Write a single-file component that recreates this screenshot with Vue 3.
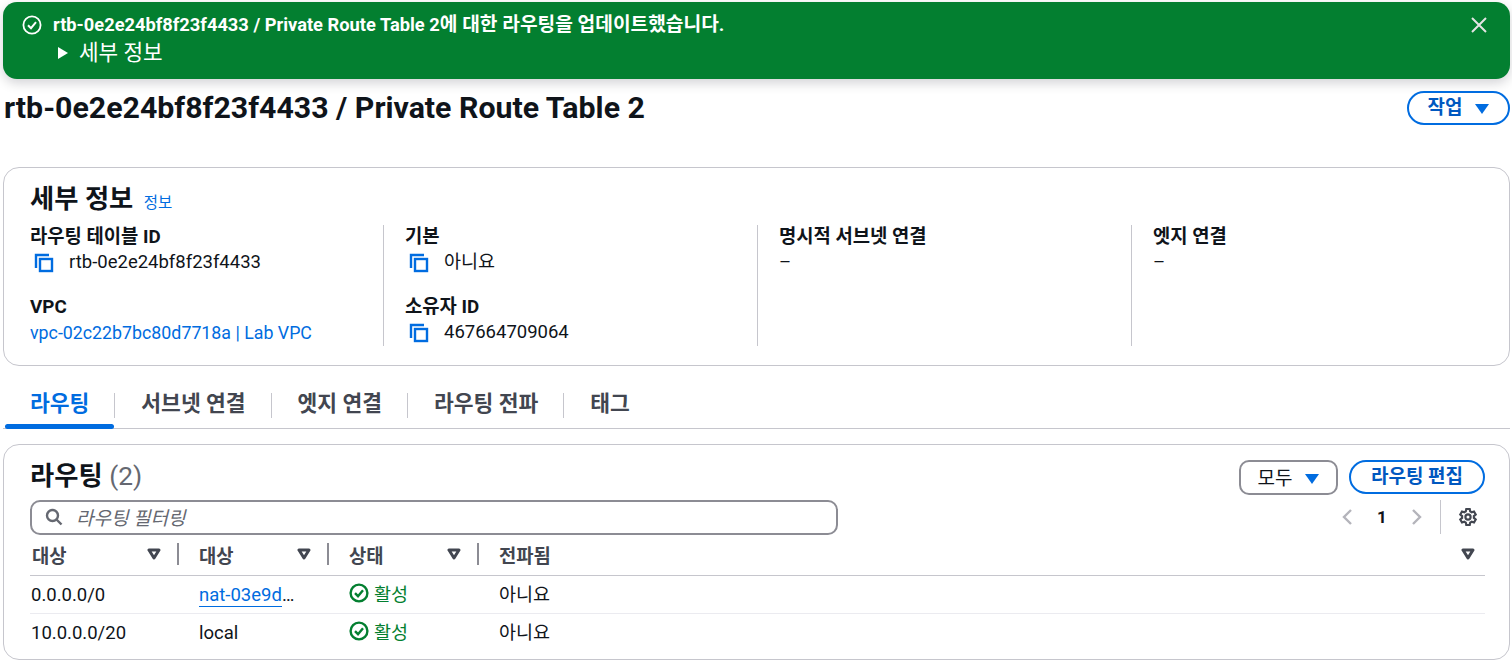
<script setup>
const details = [
  [
    { label: '라우팅 테이블 ID', value: 'rtb-0e2e24bf8f23f4433', copy: true },
    { label: 'VPC', value: 'vpc-02c22b7bc80d7718a | Lab VPC', link: true }
  ],
  [
    { label: '기본', value: '아니요', copy: true },
    { label: '소유자 ID', value: '467664709064', copy: true }
  ],
  [{ label: '명시적 서브넷 연결', value: '–' }],
  [{ label: '엣지 연결', value: '–' }]
]
const tabs = ['라우팅', '서브넷 연결', '엣지 연결', '라우팅 전파', '태그']
const columns = ['대상', '대상', '상태', '전파됨']
const routes = [
  { dest: '0.0.0.0/0', target: 'nat-03e9d', link: true },
  { dest: '10.0.0.0/20', target: 'local', link: false }
]
</script>

<template>
  <div class="page">
    <div class="flash">
      <div class="flash-body">
        <div class="flash-title">
          <svg class="flash-check" viewBox="0 0 20 20" width="20" height="20">
            <circle cx="10" cy="10" r="8.6" />
            <path d="M6 10.2l3 3 5-6" />
          </svg>
          <span>rtb-0e2e24bf8f23f4433 / Private Route Table 2<span class="flash-ko">에 대한 라우팅을 업데이트했습니다.</span></span>
        </div>
        <div class="flash-more"><i class="caret-right"></i>세부 정보</div>
      </div>
      <svg class="flash-close" viewBox="0 0 18 18" width="18" height="18">
        <path d="M2 2l14 14M16 2L2 16" />
      </svg>
    </div>

    <div class="page-head">
      <h1>rtb-0e2e24bf8f23f4433 / Private Route Table 2</h1>
      <button class="btn action-btn">작업<i class="caret-down"></i></button>
    </div>

    <section class="card detail-card">
      <h2>세부 정보 <a class="info">정보</a></h2>
      <div class="detail-grid">
        <div v-for="(col, i) in details" :key="i" class="detail-col">
          <div v-for="item in col" :key="item.label" class="detail-item">
            <div class="detail-label">{{ item.label }}</div>
            <div class="detail-value" :class="{ link: item.link }">
              <svg v-if="item.copy" class="copy" viewBox="0 0 22 22" width="22" height="22">
                <path d="M3 16V3h13" />
                <rect x="7" y="7" width="12" height="12" />
              </svg>
              <span>{{ item.value }}</span>
            </div>
          </div>
        </div>
      </div>
    </section>

    <div class="tabs">
      <div v-for="(tab, i) in tabs" :key="tab" class="tab" :class="{ active: i === 0 }">
        <span>{{ tab }}</span>
      </div>
    </div>

    <section class="card route-card">
      <div class="route-head">
        <h2>라우팅 <span class="count">(2)</span></h2>
        <div class="route-actions">
          <button class="btn select-btn">모두<i class="caret-down"></i></button>
          <button class="btn edit-btn">라우팅 편집</button>
        </div>
      </div>
      <div class="filter-row">
        <div class="filter">
          <svg viewBox="0 0 18 18" width="18" height="18">
            <circle cx="7.5" cy="7.5" r="5.5" />
            <path d="M11.5 11.5L16.5 16.5" />
          </svg>
          <span>라우팅 필터링</span>
        </div>
        <div class="pager">
          <svg class="chev" viewBox="0 0 14 18" width="14" height="18"><path d="M11 2L4 9l7 7" /></svg>
          <b>1</b>
          <svg class="chev" viewBox="0 0 14 18" width="14" height="18"><path d="M3 2l7 7-7 7" /></svg>
          <span class="pager-sep"></span>
          <svg class="gear" viewBox="0 0 20 20" width="20" height="20">
            <path d="M8.3 2h3.4l.5 2.4 1.5.9 2.3-.8 1.7 3-1.8 1.6v1.8l1.8 1.6-1.7 3-2.3-.8-1.5.9-.5 2.4H8.3l-.5-2.4-1.5-.9-2.3.8-1.7-3 1.8-1.6V9.1L2.3 7.5l1.7-3 2.3.8 1.5-.9z" />
            <circle cx="10" cy="10" r="2.6" />
          </svg>
        </div>
      </div>
      <table>
        <thead>
          <tr>
            <th v-for="(col, i) in columns" :key="i">
              <div class="th-inner">
                <span>{{ col }}</span>
                <svg class="sort" viewBox="0 0 14 12" width="14" height="12">
                  <path d="M2 2h10L7 10z" />
                </svg>
                <em v-if="i < 3" class="th-sep"></em>
              </div>
            </th>
          </tr>
        </thead>
        <tbody>
          <tr v-for="r in routes" :key="r.dest">
            <td>{{ r.dest }}</td>
            <td>
              <span v-if="r.link"><a class="nat">{{ r.target }}</a>…</span>
              <span v-else>{{ r.target }}</span>
            </td>
            <td class="status-cell">
              <span class="status">
                <svg viewBox="0 0 20 20" width="20" height="20">
                  <circle cx="10" cy="10" r="8.4" />
                  <path d="M6 10.2l3 3 5-6" />
                </svg>
                활성
              </span>
            </td>
            <td class="prop-cell">아니요</td>
          </tr>
        </tbody>
      </table>
    </section>
  </div>
</template>

<style>
html, body {
  background: #fff;
  overflow: hidden;
}
</style>

<style scoped>
.page {
  padding: 2px 2px 0 3px;
  height: 663px;
  box-sizing: border-box;
  font-family: Roboto, "Noto Sans CJK KR", sans-serif;
  font-size: 18.5px;
  color: #0f141a;
}

.flash {
  height: 77px;
  box-sizing: border-box;
  background: #037f30;
  border-radius: 14px;
  box-shadow: 0 4px 12px rgba(0, 7, 22, 0.18);
  color: #fff;
  display: flex;
  justify-content: space-between;
  padding: 9px 22px 0 19px;
}

.flash-title {
  display: flex;
  align-items: center;
  gap: 11px;
  font-weight: 700;
  font-size: 18.3px;
  line-height: 28px;
}

.flash-ko {
  font-size: 19.2px;
}

.flash-check {
  fill: none;
  stroke: #fff;
  stroke-width: 1.8;
}

.flash-check path {
  stroke-width: 2;
}

.flash-more {
  display: flex;
  align-items: center;
  margin: 0 0 0 36px;
  font-size: 21.3px;
  line-height: 28px;
}

.caret-right {
  width: 0;
  height: 0;
  border-left: 10px solid #fff;
  border-top: 6.5px solid transparent;
  border-bottom: 6.5px solid transparent;
  margin-right: 11px;
}

.flash-close {
  margin-top: 5px;
  fill: none;
  stroke: #e4e4e4;
  stroke-width: 2;
}

.page-head {
  display: flex;
  justify-content: space-between;
  align-items: flex-start;
  height: 88px;
}

h1 {
  margin: 12px 0 0 1px;
  font-size: 30.3px;
  line-height: 34px;
  font-weight: 700;
}

.btn {
  background: #fff;
  font-family: inherit;
  font-weight: 700;
  font-size: 19px;
  padding: 0;
  box-sizing: border-box;
  display: flex;
  align-items: center;
  justify-content: center;
}

.action-btn {
  margin-top: 12px;
  width: 103px;
  height: 34px;
  border: 2px solid #006ce0;
  border-radius: 17px;
  color: #0058c0;
  padding-bottom: 5px;
}

.action-btn .caret-down {
  margin-top: 7px;
  margin-left: 13px;
}

.caret-down {
  width: 0;
  height: 0;
  border-top: 10px solid #006ce0;
  border-left: 7px solid transparent;
  border-right: 7px solid transparent;
  margin: 4px 0 0 12px;
}

.card {
  border: 1px solid #c6c6cd;
  border-radius: 16px;
  box-sizing: border-box;
  background: #fff;
}

.detail-card {
  height: 199px;
  padding: 14px 26px 0;
}

h2 {
  margin: 0;
  font-size: 26.3px;
  line-height: 34px;
  font-weight: 700;
}

.info {
  font-size: 15.5px;
  font-weight: 400;
  color: #006ce0;
  margin-left: 4px;
}

.detail-grid {
  display: grid;
  grid-template-columns: 353px 374px 374px 1fr;
  height: 120px;
  margin-top: 5px;
}

.detail-col {
  border-left: 1px solid #c6c6cd;
  padding-left: 21px;
  display: flex;
  flex-direction: column;
  gap: 19px;
}

.detail-col:first-child {
  border-left: none;
  padding-left: 0;
}

.detail-label {
  font-weight: 700;
  font-size: 18.8px;
  line-height: 24px;
}

.detail-value {
  display: flex;
  align-items: center;
  gap: 14px;
  line-height: 27px;
  font-size: 18.5px;
  height: 27px;
}

.detail-value.link {
  color: #006ce0;
  font-size: 17.8px;
}

.copy {
  margin-left: 3px;
  fill: none;
  stroke: #006ce0;
  stroke-width: 2.4;
}

.tabs {
  display: flex;
  height: 43px;
  margin-top: 19px;
  border-bottom: 1px solid #c6c6cd;
}

.tab {
  position: relative;
  padding: 0 25px 0 27px;
  font-size: 21.5px;
  font-weight: 700;
  color: #424650;
  line-height: 38px;
  height: 43px;
}

.tab span {
  display: block;
}

.tab + .tab::before {
  content: '';
  position: absolute;
  left: 0;
  top: 8px;
  height: 25px;
  width: 1px;
  background: #c6c6cd;
}

.tab.active {
  color: #006ce0;
}

.tab.active::after {
  content: '';
  position: absolute;
  left: 2px;
  right: 0;
  bottom: -1px;
  height: 5px;
  border-radius: 3px;
  background: #006ce0;
}

.route-card {
  height: 216px;
  margin-top: 15px;
  padding: 0 24px 0 26px;
}

.route-head {
  display: flex;
  justify-content: space-between;
  align-items: flex-start;
  height: 55px;
}

.route-head h2 {
  margin-top: 14px;
}

.count {
  font-weight: 400;
  color: #656871;
}

.route-actions {
  display: flex;
  gap: 11px;
  margin-top: 15px;
}

.select-btn {
  width: 99px;
  height: 35px;
  border: 2px solid #8c8c94;
  border-radius: 10px;
  font-weight: 400;
  color: #0f141a;
  padding-bottom: 2px;
}

.select-btn .caret-down {
  margin-left: 13px;
}

.edit-btn {
  width: 136px;
  height: 34px;
  border: 2px solid #006ce0;
  border-radius: 17px;
  color: #0058c0;
  padding-bottom: 6px;
}

.filter-row {
  display: flex;
  justify-content: space-between;
  align-items: flex-start;
}

.filter {
  width: 808px;
  height: 35px;
  box-sizing: border-box;
  border: 2px solid #8c8c94;
  border-radius: 10px;
  display: flex;
  align-items: center;
  gap: 13px;
  padding-left: 13px;
  padding-bottom: 2px;
  font-style: italic;
  font-size: 19px;
  color: #656871;
}

.filter svg {
  fill: none;
  stroke: #656871;
  stroke-width: 2.4;
}

.pager {
  display: flex;
  align-items: center;
  height: 34px;
}

.pager b {
  font-size: 17px;
  width: 56px;
  text-align: center;
}

.chev {
  fill: none;
  stroke: #b4b4bb;
  stroke-width: 2.4;
}

.pager-sep {
  width: 1px;
  height: 34px;
  background: #c6c6cd;
  margin: 0 17px 0 16px;
}

.gear {
  fill: none;
  stroke: #424650;
  stroke-width: 2.2;
  margin-right: 7px;
}

table {
  width: 100%;
  border-collapse: collapse;
  table-layout: fixed;
  margin-top: 2px;
}

th {
  text-align: left;
  padding: 0;
  height: 38px;
  font-size: 18.8px;
  font-weight: 700;
  color: #424650;
  border-bottom: 1px solid #c6c6cd;
  width: 150px;
}

th:last-child {
  width: auto;
}

.th-inner {
  position: relative;
  display: flex;
  justify-content: space-between;
  align-items: center;
  padding: 0 19px 2px 19px;
  margin-top: -2px;
}

th:first-child .th-inner {
  padding-left: 2px;
}

th:last-child .th-inner {
  padding-right: 10px;
}

.sort {
  fill: #fff;
  stroke: #424650;
  stroke-width: 3;
  stroke-linejoin: round;
}

.th-sep {
  position: absolute;
  right: 1px;
  top: 2px;
  height: 22px;
  width: 2px;
  background: #8c8c94;
}

td {
  box-sizing: border-box;
  height: 38px;
  padding: 0 0 0 19px;
  font-size: 18.5px;
  border-bottom: 1px solid #ebebf0;
}

td:first-child {
  padding-left: 1px;
}

td.status-cell {
  padding-bottom: 2px;
}

td.prop-cell {
  padding-bottom: 4px;
}

tr:last-child td {
  border-bottom: none;
}

.nat {
  color: #006ce0;
  border-bottom: 1px solid #006ce0;
}

.status {
  display: inline-flex;
  align-items: center;
  gap: 5px;
  color: #037f30;
}

.status svg {
  fill: none;
  stroke: #037f30;
  stroke-width: 2.4;
}
</style>
